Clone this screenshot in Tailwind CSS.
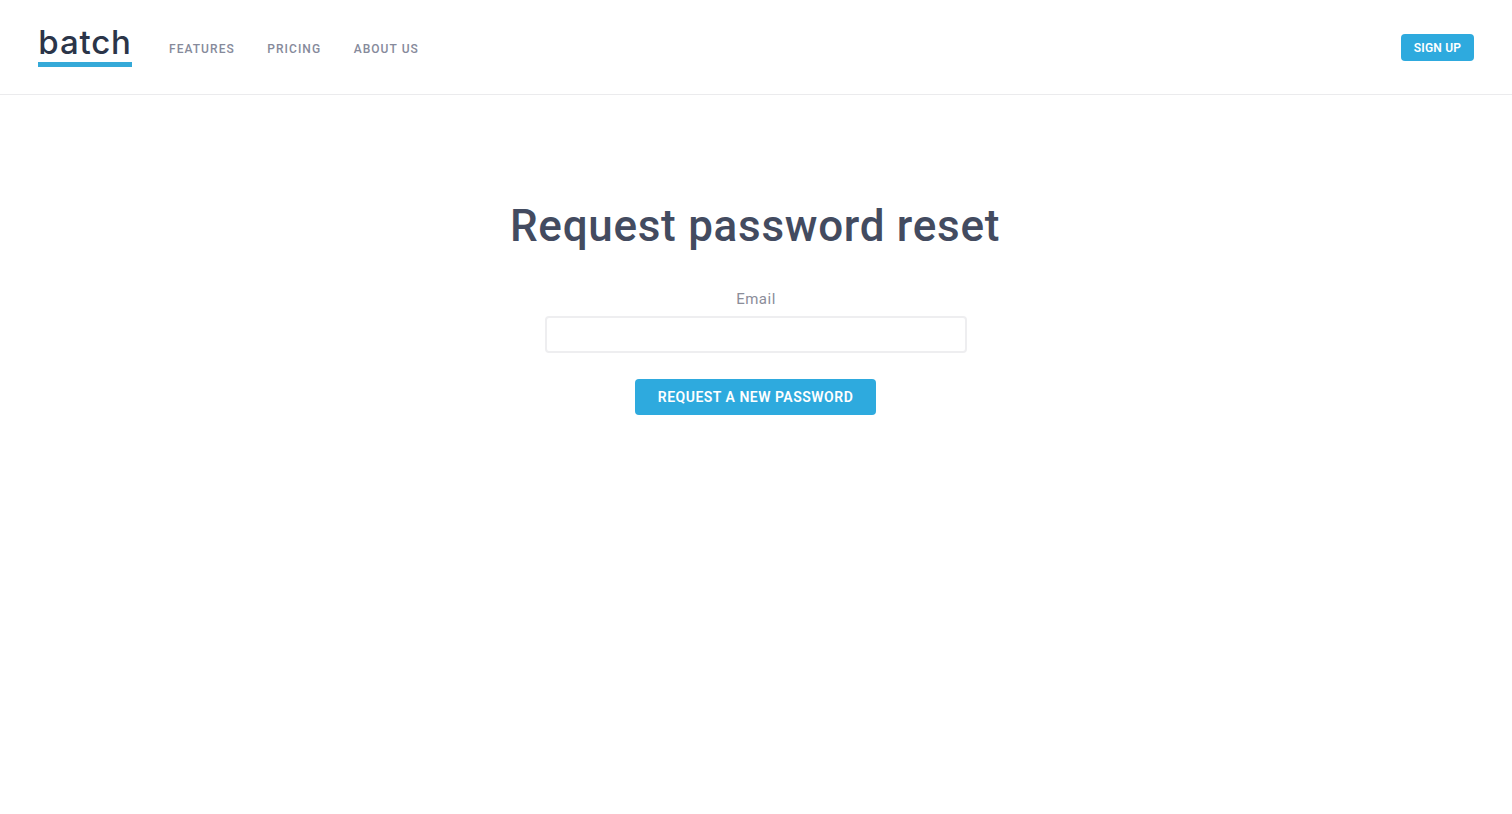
<!DOCTYPE html>
<html>
  <head>
    <meta charset="UTF-8">
    <meta name="viewport" content="width=device-width, initial-scale=1.0">
    <title>Request password reset</title>
    <script src="https://cdn.jsdelivr.net/npm/@tailwindcss/browser@4"></script>
  </head>
  <body class="bg-white font-['Roboto',sans-serif]">
    <!-- Header -->
    <header class="h-[95px] border-b border-[#ebebed] flex items-center justify-between pl-[38px] pr-[38px]">
      <div class="flex items-center">
        <a href="#" class="block w-[94px] border-b-[5px] border-[#35a9d8] mr-[37px]">
          <span class="block h-[34px] leading-[28px] text-center text-[#2b3549] text-[33px] font-medium font-['Inter',sans-serif] tracking-[0.8px]">batch</span>
        </a>
        <nav class="flex items-center gap-[32.5px] mt-[3px] text-[12px] font-medium tracking-[1.05px] text-[#868a9b] uppercase">
          <a href="#">Features</a>
          <a href="#">Pricing</a>
          <a href="#">About us</a>
        </nav>
      </div>
      <a href="#" class="w-[73px] h-[27px] rounded-[4px] bg-[#2eaade] text-white text-[12px] font-semibold flex items-center justify-center tracking-[0.2px] mb-[-1px]">SIGN UP</a>
    </header>

    <!-- Form -->
    <main class="flex flex-col items-center pt-[101px]">
      <h1 class="text-[44px] leading-[60px] font-medium text-[#434b60] tracking-[0.72px] mr-[2px]">Request password reset</h1>
      <form class="w-[422px] flex flex-col items-center mt-[32px]">
        <label for="email" class="text-[15px] leading-[22px] text-[#8b8d99] tracking-[0.5px] mb-[6px]">Email</label>
        <input id="email" type="email" class="w-full h-[37px] bg-white border-2 border-[#eeeef0] rounded-[4px]">
        <button type="button" class="mt-[26px] mr-[1px] w-[241px] h-[36px] bg-[#2eaade] rounded-[4px] text-white text-[14px] font-semibold tracking-[0.5px]">REQUEST A NEW PASSWORD</button>
      </form>
    </main>
  </body>
</html>
